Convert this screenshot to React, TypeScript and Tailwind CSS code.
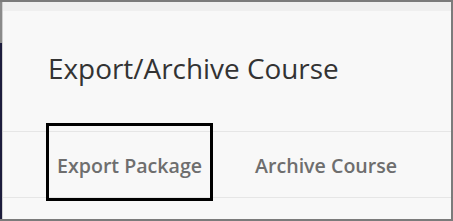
export default function App() {
  return (
    <div className="w-[453px] h-[221px] bg-[#7b7b7b] p-[2px] pl-0 box-border flex">
      <div className="w-[2px] flex flex-col">
        <div className="h-[41px] bg-[#8a8a8a]" />
        <div className="flex-1 bg-[#1c1c3c]" />
      </div>
      <div className="w-[1px] bg-[#d0d0d0]" />
      <div
        className="flex-1 bg-[#f8f8f8] flex flex-col"
        style={{ fontFamily: '"Open Sans", "Noto Sans", sans-serif' }}
      >
        <div className="h-[9px] bg-[#efefef]" />
        <div className="h-[121px] border-b border-[#e6e6e6] flex items-center pl-[45px] pb-[4px]">
          <h1 className="text-[27.9px] text-[#333333] font-normal">Export/Archive Course</h1>
        </div>
        <div className="h-[66px] border-b border-[#e6e6e6] flex items-center pl-[43px] pt-[3px] relative">
          <div className="text-[19.6px] font-semibold text-[#6e6e6e] pl-[11px] pr-[9px]">Export Package</div>
          <div className="text-[19.6px] font-semibold text-[#6e6e6e] ml-[44px]">Archive Course</div>
          <div className="absolute left-[43px] top-[-9px] w-[167px] h-[78px] border-[3px] border-black" />
        </div>
      </div>
    </div>
  );
}
